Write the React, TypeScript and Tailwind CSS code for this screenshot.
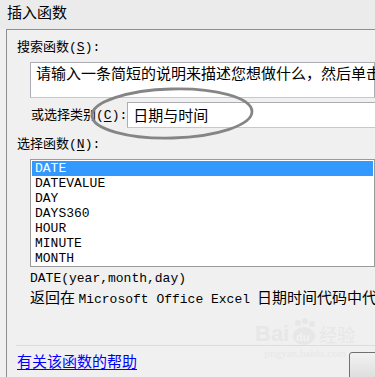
const cjk = "font-['Noto_Sans_CJK_SC',sans-serif]";
const mono = "font-['Liberation_Mono','Noto_Sans_CJK_SC',monospace]";

const functions = ["DATE", "DATEVALUE", "DAY", "DAYS360", "HOUR", "MINUTE", "MONTH"];

function Hotkey({ k }: { k: string }) {
  return (
    <span className={`${mono} text-[13px]`}>
      (<span className="underline underline-offset-2">{k}</span>):
    </span>
  );
}

export default function App() {
  return (
    <div className={`relative h-[377px] w-[375px] overflow-hidden bg-[#f0f0f0] text-black ${cjk}`}>
      {/* title bar */}
      <div className="h-[29px] bg-[#ebebeb] pl-[7px] pt-[2px] text-[15px] leading-[20px]">插入函数</div>

      <div className="ml-[6px] flex h-[348px] flex-col border-l border-t border-[#8f8f8f] pl-[10px]">
        <div className="mt-[8px] text-[13px] leading-[16px]">
          搜索函数<Hotkey k="S" />
        </div>

        <div className="ml-[13px] mt-[6px] h-[36px] border border-[#abadb3] border-b-[#c8c8c8] bg-white px-[5px] text-[15px] leading-[20px] whitespace-nowrap">
          请输入一条简短的说明来描述您想做什么，然后单击
        </div>

        <div className="mt-[4px] flex items-center">
          <div className="ml-[14px] w-[111px] text-[13px] leading-[16px] whitespace-nowrap">
            或选择类别<Hotkey k="C" />
          </div>
          <div className="h-[26px] w-[260px] shrink-0 border border-[#abadb3] border-b-[#c8c8c8] bg-white pl-[5px] text-[15px] leading-[23px]">
            日期与时间
          </div>
        </div>

        <div className="mt-[7px] text-[13px] leading-[16px]">
          选择函数<Hotkey k="N" />
        </div>

        <div className="ml-[13px] mt-[6px] h-[108px] overflow-hidden border border-[#9a9a9a] bg-white p-[1px]">
          {functions.map((f, i) => (
            <div
              key={f}
              className={`h-[15px] px-[3px] ${mono} text-[13px] leading-[15px] ${i === 0 ? "bg-[#3399ff] text-white" : ""}`}
            >
              {f}
            </div>
          ))}
        </div>

        <div className={`ml-[13px] mt-[3px] ${mono} text-[13px] leading-[17px]`}>DATE(year,month,day)</div>
        <div className="ml-[13px] whitespace-nowrap text-[15px] leading-[20px]">
          返回在 <span className={`${mono} text-[13px]`}>Microsoft Office Excel</span>
          <span className="ml-[7px]">日期时间代码中代表日期的数字</span>
        </div>

        <div className="-ml-[1px] mt-auto h-px bg-[#d5dfe5]" />
        <div className="flex h-[31px] items-start">
          <a className="mt-[5px] text-[15px] leading-[20px] text-[#0000ff] underline underline-offset-2">有关该函数的帮助</a>
          <button className="-mr-[34px] ml-auto mt-[6px] h-[30px] w-[60px] shrink-0 rounded-[3px] border border-[#707070] bg-gradient-to-b from-[#f2f2f2] to-[#dcdcdc]" />
        </div>
      </div>

      {/* highlight ellipse drawn over the category row */}
      <svg className="absolute left-[86px] top-[84px]" width="172" height="60" viewBox="0 0 172 60">
        <ellipse cx="86" cy="29.5" rx="80" ry="24.5" fill="none" stroke="#858585" strokeWidth="2.8" transform="rotate(-1.5 86 29.5)" />
      </svg>

      {/* watermark */}
      <div className="pointer-events-none absolute left-[255px] top-[318px] flex flex-col items-center opacity-60">
        <div className="flex items-end gap-[2px]">
          <span className="font-['Liberation_Sans',sans-serif] text-[22px] font-bold leading-[24px] text-[#e2e2e2]">Bai</span>
          <svg width="26" height="28" viewBox="0 0 26 28">
            <circle cx="7" cy="5" r="3" fill="#e2e2e2" />
            <circle cx="14" cy="3" r="3" fill="#e2e2e2" />
            <circle cx="21" cy="6" r="3" fill="#e2e2e2" />
            <ellipse cx="13" cy="18" rx="11" ry="9" fill="#e2e2e2" />
            <text x="5" y="23" fontSize="11" fontWeight="bold" fill="#f4f4f4" fontFamily="Liberation Sans">du</text>
          </svg>
          <span className="text-[18px] leading-[24px] text-[#e2e2e2]">经验</span>
        </div>
        <span className="font-['Liberation_Serif',serif] text-[11px] leading-[14px] text-[#e2e2e2]">jingyan.baidu.com</span>
      </div>
    </div>
  );
}
